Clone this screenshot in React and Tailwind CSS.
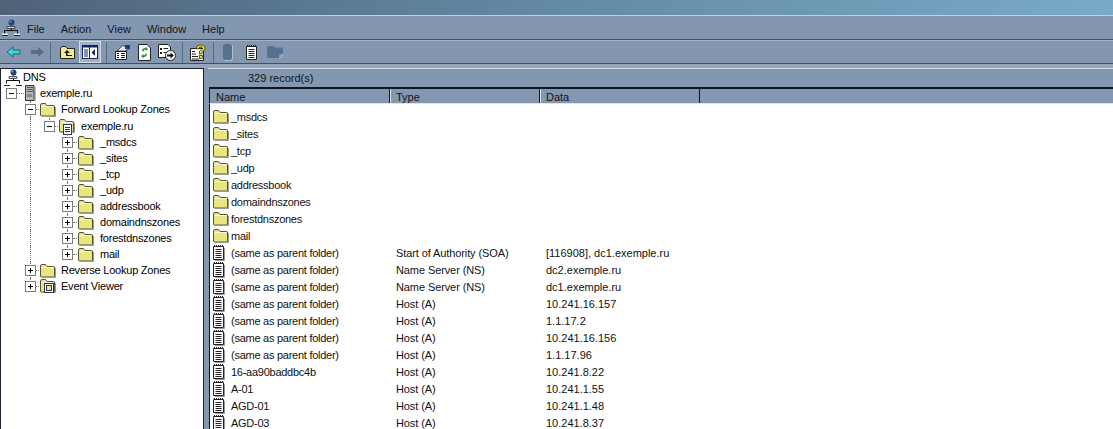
import React from "react";

const Folder = () => (
  <svg width="17" height="15" viewBox="0 0 17 15" className="shrink-0 block">
    <path d="M1.5 4 L1.5 13 Q1.5 14 2.5 14 L14.5 14 Q15.5 14 15.5 13 L15.5 4 Q15.5 3.5 14.5 3.5 L8 3.5 L6.5 1.5 L3 1.5 Q1.5 1.5 1.5 3 Z" fill="#e8e48a" stroke="#55553a" strokeWidth="1" />
    <path d="M2.5 5.5 H14.5 V13 H2.5 Z" fill="#e9e680" />
    <path d="M2.5 4.5 H14.5" stroke="#fbfbd8" strokeWidth="1" />
    <path d="M16.5 5 V14.5 H3" stroke="#9a9a90" strokeWidth="1" fill="none" />
  </svg>
);

const Doc = () => (
  <svg width="14" height="17" viewBox="0 0 14 17" className="shrink-0 block">
    <path d="M1.5 2.5 H11.5 V15.5 H1.5 Z" fill="#fff" stroke="#222" />
    <path d="M2 1.5 H11" stroke="#222" strokeDasharray="1 1" />
    <path d="M12.5 4 V16.5 H3" stroke="#999" fill="none" />
    <path d="M3.5 5.5 H9.5 M3.5 7.5 H9.5 M3.5 9.5 H9.5 M3.5 11.5 H9.5 M3.5 13.5 H9.5" stroke="#222" />
  </svg>
);

const Net = () => (
  <svg width="18" height="18" viewBox="0 0 18 18" className="block shrink-0">
    <circle cx="9.5" cy="3.5" r="3" fill="#24407e" />
    <circle cx="8.5" cy="2.5" r="1" fill="#7d9ad4" />
    <path d="M9 6.5 H10 V10 H9 Z" fill="#e8e8e8" stroke="#333" strokeWidth="0.5" />
    <path d="M5 7.5 H13 V9.5 H5 Z" fill="#d4d4d4" stroke="#222" strokeWidth="0.7" />
    <path d="M2.5 15 V11.5 H15.5 V15 M9.5 9.5 V11.5" fill="none" stroke="#111" />
    <path d="M0 15.5 H6 M12 15.5 H18" stroke="#fff" strokeWidth="2" />
    <path d="M0 16.5 H6 M12 16.5 H18" stroke="#222" />
  </svg>
);

const Server = () => (
  <svg width="12" height="18" viewBox="0 0 12 18" className="block shrink-0">
    <path d="M1.5 1.5 H10 V16.5 H1.5 Z" fill="#b8b8b8" stroke="#333" />
    <path d="M3 3.5 H9 M3 5.5 H9 M3 7.5 H9" stroke="#555" />
    <path d="M3 10 H8 V13 H3 Z" fill="#888" />
    <path d="M11 3 V17" stroke="#777" />
  </svg>
);

const ExpBox = ({ plus, line }) => (
  <span className="relative shrink-0 w-[11px] h-full flex items-center">
    {line === "full" && <span className="absolute left-[5px] top-0 bottom-0 border-l border-dotted border-[#777]" />}
    {line === "top" && <span className="absolute left-[5px] top-0 h-1/2 border-l border-dotted border-[#777]" />}
    <span className="relative block w-[11px] h-[11px] border border-[#7b7b7b] bg-white">
      <span className="absolute left-[2px] top-[4px] w-[5px] h-px bg-black" />
      {plus && <span className="absolute left-[4px] top-[2px] w-px h-[5px] bg-black" />}
    </span>
  </span>
);

const Guide = ({ w, line }) => (
  <span className={`relative shrink-0 h-full ${w}`}>
    {line && <span className="absolute left-[5px] top-0 bottom-0 border-l border-dotted border-[#777]" />}
  </span>
);

const ZoneFolder = () => (
  <span className="relative block w-[17px] h-[17px] shrink-0">
    <Folder />
    <span className="absolute left-[5px] top-[6px] w-[9px] h-[11px] bg-white border border-[#27336e] flex flex-col justify-center gap-px px-px">
      <span className="block h-px bg-[#27336e]" />
      <span className="block h-px bg-[#27336e]" />
      <span className="block h-px bg-[#27336e]" />
    </span>
  </span>
);

const EventIcon = () => (
  <span className="relative block w-[17px] h-[17px] shrink-0">
    <Folder />
    <span className="absolute left-[5px] top-[5px] w-[10px] h-[10px] bg-white border border-[#333] flex items-center justify-center">
      <span className="block w-[6px] h-[6px] border border-[#27336e] bg-[#e8e48a]" />
    </span>
  </span>
);

const subZones = ["_msdcs", "_sites", "_tcp", "_udp", "addressbook", "domaindnszones", "forestdnszones", "mail"];

const Conn = ({ w = "w-[3px]" }) => (
  <span className={`shrink-0 h-px border-t border-dotted border-[#777] ${w}`} />
);

const TreeRow = ({ guides, box, icon, label, gap = "ml-[5px]", conn }) => (
  <div className="relative flex items-center h-[16px] whitespace-nowrap">
    {guides}
    {box}
    <Conn w={conn} />
    {icon}
    <span className={gap}>{label}</span>
  </div>
);

const Tree = () => (
  <div className="w-[204px] shrink-0 bg-white text-black border-l border-t border-r border-[#1c2430] overflow-hidden pl-[3px] tracking-[-0.22px]">
    <div className="flex items-start gap-[1px] h-[16px]">
      <Net />
      <span>DNS</span>
    </div>
    <div className="flex items-center h-[16px] whitespace-nowrap pl-[2px]">
      <ExpBox />
      <Conn w="w-[7px]" />
      <Server />
      <span className="ml-[4px]">exemple.ru</span>
    </div>
    <div className="pl-[21px]">
      <TreeRow box={<ExpBox line="full" />} icon={<Folder />} label="Forward Lookup Zones" />
      <div className="h-[1px] flex"><Guide w="w-[19px]" line /></div>
      <TreeRow
        guides={<Guide w="w-[19px]" line />}
        box={<ExpBox line="top" />}
        icon={<ZoneFolder />}
        label="exemple.ru"
        gap="ml-[6px]"
      />
      {subZones.map((z, i) => (
        <TreeRow
          key={z}
          guides={
            <>
              <Guide w="w-[19px]" line />
              <Guide w="w-[18px]" />
            </>
          }
          box={<ExpBox plus line={i === subZones.length - 1 ? "top" : "full"} />}
          icon={<Folder />}
          conn="w-[4px]"
          label={z}
          gap="ml-[6px]"
        />
      ))}
      <TreeRow box={<ExpBox plus line="full" />} icon={<Folder />} label="Reverse Lookup Zones" />
      <TreeRow box={<ExpBox plus line="top" />} icon={<EventIcon />} label="Event Viewer" />
    </div>
  </div>
);

const folders = ["_msdcs", "_sites", "_tcp", "_udp", "addressbook", "domaindnszones", "forestdnszones", "mail"];
const P = "(same as parent folder)";
const records = [
  [P, "Start of Authority (SOA)", "[116908], dc1.exemple.ru"],
  [P, "Name Server (NS)", "dc2.exemple.ru"],
  [P, "Name Server (NS)", "dc1.exemple.ru"],
  [P, "Host (A)", "10.241.16.157"],
  [P, "Host (A)", "1.1.17.2"],
  [P, "Host (A)", "10.241.16.156"],
  [P, "Host (A)", "1.1.17.96"],
  ["16-aa90baddbc4b", "Host (A)", "10.241.8.22"],
  ["A-01", "Host (A)", "10.241.1.55"],
  ["AGD-01", "Host (A)", "10.241.1.48"],
  ["AGD-03", "Host (A)", "10.241.8.37"],
];

const Row = ({ icon, name, type, data }) => (
  <div className="flex items-center h-[17px] whitespace-nowrap">
    <span className="w-[179px] shrink-0 flex items-center pl-[2px]">
      <span className="w-[17px] shrink-0 flex justify-start">{icon}</span>
      <span className="ml-[2px] tracking-[-0.26px]">{name}</span>
    </span>
    <span className="w-[151px] shrink-0 pl-[7px] tracking-[-0.1px]">{type}</span>
    <span className="pl-[6px]">{data}</span>
  </div>
);

const HeadCell = ({ w, pl, children }) => (
  <div className={`${w} ${pl} shrink-0 h-full pt-[2px] border-r border-[#10161f] flex items-center`}>{children}</div>
);

const Sep = () => <span className="w-px h-[21px] mx-[5px] bg-[#566a84] shrink-0" />;

const Toolbar = () => (
  <div className="h-[24px] flex items-center pl-[6px] border-b border-[#3f5068] border-t-[#a6b3c6] border-t shrink-0">
    <svg width="16" height="14" viewBox="0 0 16 14" className="shrink-0">
      <path d="M1 7 L7 2 V5 H14 V9 H7 V12 Z" fill="#3fd4d8" stroke="#16505c" strokeWidth="0.8" />
    </svg>
    <svg width="16" height="14" viewBox="0 0 16 14" className="shrink-0 ml-[7px]">
      <path d="M15 7 L9 2 V5 H2 V9 H9 V12 Z" fill="#5a6c86" />
    </svg>
    <Sep />
    <span className="w-[22px] h-[22px] flex items-center justify-center shrink-0">
      <svg width="17" height="15" viewBox="0 0 17 15">
        <path d="M1.5 3.5 L1.5 13.5 H15.5 V3.5 H8 L6.5 1.5 H3 Z" fill="#f0ec90" stroke="#222" />
        <path d="M8 5 L5 8 H7 V11 H13 V10 H8.5 V8 H11 Z" fill="#111" />
      </svg>
    </span>
    <span className="w-[22px] h-[22px] ml-[1px] flex items-center justify-center shrink-0 bg-[#a3b1c5] border border-[#d6dde6]">
      <svg width="16" height="14" viewBox="0 0 16 14">
        <rect x="0.5" y="0.5" width="15" height="13" fill="#fff" stroke="#17245e" />
        <path d="M0 0.5 H16 V2.5 H0 Z" fill="#17245e" />
        <path d="M7.5 1 V13" stroke="#17245e" />
        <path d="M2 5 H6 M2 7 H6 M2 9 H6 M2 11 H6" stroke="#17245e" />
        <path d="M13 4 L9.5 7.5 L13 11 Z" fill="#17245e" />
      </svg>
    </span>
    <Sep />
    <span className="w-[20px] flex justify-center shrink-0">
      <svg width="17" height="17" viewBox="0 0 17 17">
        <path d="M1.5 7.5 H12.5 V15.5 H1.5 Z" fill="#fff" stroke="#222" />
        <path d="M3 9.5 H5 M7 9.5 H11 M3 11.5 H5 M7 11.5 H11 M3 13.5 H5 M7 13.5 H11" stroke="#222" />
        <path d="M3 7 L8 2 H14 V6 H12 V7 Z" fill="#e8e8e8" stroke="#222" strokeWidth="0.7" />
        <path d="M11 1 H16 V5 H11 Z" fill="#1f3a78" />
      </svg>
    </span>
    <span className="w-[20px] ml-[2px] flex justify-center shrink-0">
      <svg width="13" height="17" viewBox="0 0 13 17">
        <path d="M0.5 0.5 H9 L12.5 4 V16.5 H0.5 Z" fill="#fff" stroke="#222" />
        <path d="M4 7 Q4 4 7.5 4 V2.5 L10 5 L7.5 7 V5.5 Q5.5 5.5 5.5 7.5 Z" fill="#27953a" />
        <path d="M9 10 Q9 13 5.5 13 V14.5 L3 12 L5.5 10 V11.5 Q7.5 11.5 7.5 9.5 Z" fill="#27953a" />
      </svg>
    </span>
    <span className="w-[20px] ml-[3px] flex justify-center shrink-0">
      <svg width="18" height="17" viewBox="0 0 18 17">
        <path d="M0.5 0.5 H10 L12.5 3 V13.5 H0.5 Z" fill="#fff" stroke="#222" />
        <path d="M2 4 H4 V6 H2 Z M2 8 H4 V10 H2 Z" fill="#222" />
        <path d="M5.5 4.5 H10 M5.5 8.5 H8" stroke="#222" />
        <circle cx="12.5" cy="11.5" r="5" fill="#fff" stroke="#222" />
        <path d="M9 10.5 H12.5 V8.5 L16 11.5 L12.5 14.5 V12.5 H9 Z" fill="#111" />
      </svg>
    </span>
    <Sep />
    <span className="w-[20px] flex justify-center shrink-0">
      <svg width="17" height="17" viewBox="0 0 17 17">
        <path d="M0.5 4.5 H13.5 V16.5 H0.5 Z" fill="#fff" stroke="#222" />
        <path d="M2 7.5 H5 M2 10 H6 M2 12.5 H8 M2 15 H9" stroke="#222" />
        <path d="M6 4.5 Q6.5 1 10.5 1 Q15 1 15 4.5 Q15 6.5 12 8 V10 H9.5 V7 Q12.5 6 12.5 4.5 Q12.5 3 10.5 3 Q8.8 3 8.5 5 Z" fill="#f4e21c" stroke="#222" strokeWidth="0.7" />
        <rect x="9.5" y="11.5" width="2.8" height="2.8" fill="#f4e21c" stroke="#222" strokeWidth="0.7" />
      </svg>
    </span>
    <Sep />
    <span className="block w-[10px] h-[17px] ml-[4px] shrink-0 bg-[#56708f] rounded-[3px] border-r border-b border-[#b4c0d0]" />
    <span className="ml-[12px] shrink-0 flex">
      <Doc />
    </span>
    <svg width="16" height="15" viewBox="0 0 16 15" className="ml-[8px] shrink-0">
      <path d="M0 3 Q0 1 2 1 H6 L8 2.5 H14 Q16 2.5 16 4.5 V9 H12 V13 H2 Q0 13 0 11 Z" fill="#56708f" />
      <path d="M12.5 13.5 L16 9.5" stroke="#b4c0d0" />
    </svg>
  </div>
);

export default function App() {
  return (
    <div
      className="w-[1113px] h-[429px] overflow-hidden flex flex-col bg-[#8497b0] text-[11px] leading-[16px] text-[#10151d]"
      style={{ fontFamily: '"Liberation Sans", Arial, sans-serif' }}
    >
      <div className="h-[16px] shrink-0 bg-gradient-to-r from-[#4f6379] via-[#638aa6] to-[#7aaac6] border-b border-[#c4d0dc]" />
      <div className="h-[24px] shrink-0 flex items-center border-b border-[#3f5068] pl-[2px]">
        <span className="mr-[7px]">
          <Net />
        </span>
        <div className="flex gap-[16px] mt-[2px]">
          <span>File</span>
          <span>Action</span>
          <span>View</span>
          <span>Window</span>
          <span>Help</span>
        </div>
      </div>
      <Toolbar />
      <div className="h-[4px] shrink-0 bg-[#95a6bc]" />
      <div className="flex-1 flex min-h-0">
        <Tree />
        <div className="w-[4px] shrink-0" />
        <div className="flex-1 flex flex-col min-w-0">
          <div className="h-[19px] shrink-0 flex items-center pl-[40px] border-t border-[#d5dce5]">
            329 record(s)
          </div>
          <div className="h-[17px] shrink-0 flex border-t-2 border-l border-b border-t-[#10161f] border-l-[#10161f] border-b-[#dfe5ec] ml-[1px]">
            <HeadCell w="w-[180px]" pl="pl-[6px]">Name</HeadCell>
            <div className="w-px bg-[#dfe5ec] -mr-px" />
            <HeadCell w="w-[150px]" pl="pl-[6px]">Type</HeadCell>
            <div className="w-px bg-[#dfe5ec] -mr-px" />
            <HeadCell w="w-[160px]" pl="pl-[6px]">Data</HeadCell>
            <div className="flex-1" />
          </div>
          <div className="flex-1 bg-white text-[#111] ml-[1px] pt-[4px] overflow-hidden border-l border-[#10161f]">
            {folders.map((f) => (
              <Row key={f} icon={<Folder />} name={f} />
            ))}
            {records.map((r, i) => (
              <Row key={i} icon={<Doc />} name={r[0]} type={r[1]} data={r[2]} />
            ))}
          </div>
        </div>
      </div>
    </div>
  );
}
